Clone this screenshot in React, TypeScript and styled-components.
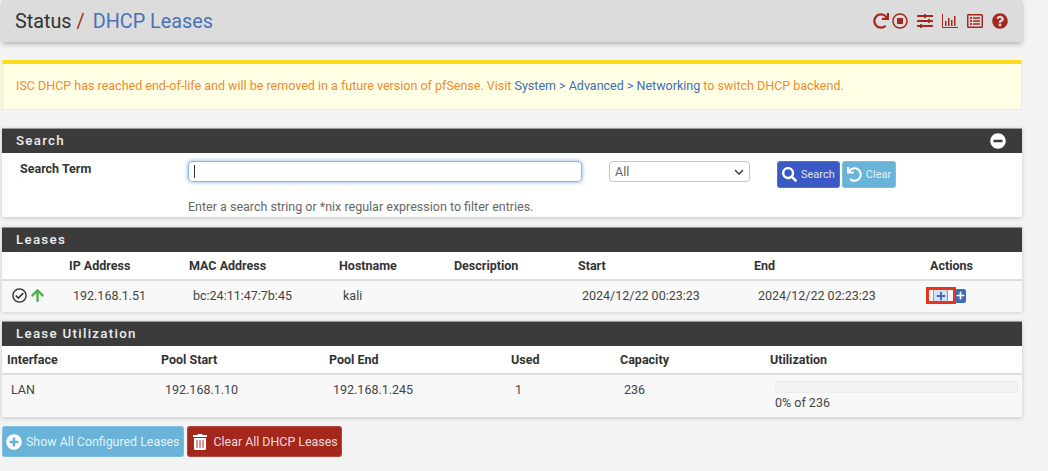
import React from "react";
import styled, { createGlobalStyle } from "styled-components";
import {
  FaArrowUp,
  FaMinusCircle,
  FaPlus,
  FaPlusCircle,
  FaQuestionCircle,
  FaRedo,
  FaRegCheckCircle,
  FaRegListAlt,
  FaRegStopCircle,
  FaSearch,
  FaSlidersH,
  FaTrashAlt,
  FaUndo,
} from "react-icons/fa";

const GlobalStyle = createGlobalStyle`
  html, body {
    margin: 0;
    background: #f3f3f3;
    font-family: Roboto, "Liberation Sans", sans-serif;
    font-size: 12.5px;
    color: #444;
  }
  * { box-sizing: border-box; }
`;

const Page = styled.div`
  width: 1048px;
  height: 471px;
  padding: 0 26px 0 2px;
  overflow: hidden;
`;

const TopBar = styled.header`
  height: 42px;
  background: #dcdcdc;
  box-shadow: 0 2px 5px rgba(0, 0, 0, 0.28);
  display: flex;
  align-items: center;
  justify-content: space-between;
  padding: 0 14px 0 13px;
`;

const Crumbs = styled.h1`
  margin: 0;
  font-size: 19.8px;
  font-weight: 400;
  color: #333;
  display: flex;
`;

const Slash = styled.span`
  color: #a52a22;
  margin: 0 8px 0 5px;
`;

const Current = styled.span`
  color: #4a72b8;
`;

const ToolIcons = styled.div`
  display: flex;
  align-items: center;
  gap: 9px;
  color: #a5281f;
  font-size: 16px;
  svg {
    display: block;
  }
  svg:first-child {
    margin-right: -6px;
  }
`;

const Notice = styled.div`
  margin-top: 18px;
  height: 50px;
  background: #ffffe6;
  border: 1px solid #fbeeb0;
  border-top: 4px solid #f9dc1c;
  padding: 0 13px 2px;
  display: flex;
  align-items: center;
  color: #f08a2c;
  a {
    color: #3f6cb4;
    text-decoration: none;
    white-space: pre;
  }
`;

const Panel = styled.section<{ $gap: number; $height: number }>`
  margin-top: ${(p) => p.$gap}px;
  height: ${(p) => p.$height}px;
  background: #fff;
  box-shadow: 0 1px 4px rgba(0, 0, 0, 0.2);
`;

const PanelHead = styled.div`
  height: 25px;
  background: #3b3b3b;
  border-top: 1px solid #999;
  color: #eee;
  font-size: 13.3px;
  font-weight: 500;
  letter-spacing: 1.3px;
  padding: 0 14px 2px;
  display: flex;
  align-items: center;
  justify-content: space-between;
`;

const Collapse = styled(FaMinusCircle)`
  color: #fff;
  font-size: 16px;
  margin: 2px 2px 0 0;
`;

const SearchForm = styled.div`
  display: grid;
  grid-template-columns: 186px 407px 182px 1fr;
  padding-top: 8px;
`;

const FieldLabel = styled.label`
  font-weight: 700;
  color: #333;
  padding: 0 0 0 18px;
  margin-top: 1px;
  line-height: 14px;
`;

const SearchBox = styled.div`
  width: 394px;
  height: 21px;
  border: 1px solid #86b6ee;
  border-radius: 4px;
  box-shadow: 0 0 4px rgba(102, 160, 233, 0.85);
  padding: 3px 5px;
  &::after {
    content: "";
    display: block;
    width: 1px;
    height: 13px;
    background: #333;
  }
`;

const Select = styled.div`
  width: 141px;
  height: 21px;
  margin-left: 14px;
  border: 1px solid #c4c4c4;
  border-radius: 4px;
  display: flex;
  align-items: center;
  justify-content: space-between;
  padding: 0 5px;
  color: #666;
  svg {
    display: block;
  }
`;

const ButtonRow = styled.div`
  display: flex;
  gap: 2px;
`;

const Btn = styled.button<{ $color: string; $wide?: boolean }>`
  height: ${(p) => (p.$wide ? 31 : 27)}px;
  border: 1px solid rgba(255, 255, 255, 0.15);
  border-radius: 3px;
  background: ${(p) => p.$color};
  color: rgba(255, 255, 255, 0.85);
  font-family: inherit;
  font-size: ${(p) => (p.$wide ? 12.4 : 11)}px;
  display: flex;
  align-items: center;
  gap: 4px;
  padding: 0 ${(p) => (p.$wide ? "3px" : "4px")};
  svg {
    color: #fff;
    font-size: ${(p) => (p.$wide ? 16 : 15)}px;
  }
`;

const TrashIcon = styled(FaTrashAlt)`
  margin: 0 2px 0 1px;
`;

const HelpText = styled.div`
  grid-column: 2 / span 3;
  margin-top: 11px;
  color: #666;
`;

const Row = styled.div<{ $cols: string; $head?: boolean; $tall?: boolean }>`
  display: grid;
  grid-template-columns: ${(p) => p.$cols};
  align-items: ${(p) => (p.$tall ? "start" : "center")};
  height: ${(p) => (p.$head ? 29 : p.$tall ? 42 : 31)}px;
  padding: ${(p) => (p.$tall ? "7px 0 0" : p.$head ? "0" : "0 0 2px")};
  background: ${(p) => (p.$head ? "#fff" : "#f8f8f8")};
  font-weight: ${(p) => (p.$head ? 700 : 400)};
  color: ${(p) => (p.$head ? "#333" : "#444")};
  border-bottom: ${(p) => (p.$head ? "2px solid #ddd" : "none")};
`;

const Th = styled.div`
  padding-left: 5px;
`;

const Td = styled.div`
  padding-left: 9px;
`;

const StatusIcons = styled.div`
  display: flex;
  align-items: center;
  gap: 3px;
  padding-left: 10px;
  font-size: 15px;
  svg {
    display: block;
  }
`;

const ActionCell = styled.div`
  position: relative;
  display: flex;
  align-items: center;
  padding-left: 8px;
`;

const ActionBtn = styled.span<{ $active?: boolean }>`
  width: ${(p) => (p.$active ? 15 : 11)}px;
  height: ${(p) => (p.$active ? 13 : 14)}px;
  margin-right: ${(p) => (p.$active ? 7 : 0)}px;
  border: ${(p) => (p.$active ? "1px solid #7f9fd0" : "none")};
  border-radius: 2px;
  background: ${(p) => (p.$active ? "#d5e0f1" : "#3f6cb4")};
  color: ${(p) => (p.$active ? "#3f6cb4" : "#fff")};
  font-size: ${(p) => (p.$active ? 10 : 9)}px;
  display: flex;
  align-items: center;
  justify-content: center;
`;

const Marker = styled.span`
  position: absolute;
  left: 1px;
  top: 50%;
  width: 30px;
  height: 17px;
  margin-top: -9px;
  border: 3px solid #e8341c;
`;

const UtilCell = styled.div`
  margin-top: -1px;
  padding: 0 4px 0 10px;
`;

const Meter = styled.div`
  height: 12px;
  background: #f3f3f3;
  border: 1px solid #ebebeb;
  border-radius: 3px;
  margin-bottom: 2px;
`;

const Actions = styled.div`
  display: flex;
  gap: 3px;
  margin-top: 9px;
`;

const LEASE_COLS = "62px 120px 150px 115px 124px 176px 176px 97px";
const UTIL_COLS = "154px 168px 182px 109px 150px 257px";

export default function App() {
  return (
    <>
      <GlobalStyle />
      <Page>
        <TopBar>
          <Crumbs>
            Status<Slash>/</Slash>
            <Current>DHCP Leases</Current>
          </Crumbs>
          <ToolIcons>
            <FaRedo />
            <FaRegStopCircle />
            <FaSlidersH />
            <svg width="16" height="16" viewBox="0 0 16 16" fill="currentColor">
              <path d="M0 1h1v13h15v1H0z" />
              <path d="M3 8h1.5v5H3zM6 5h1.5v8H6zM9 7h1.5v6H9zM12 3h1.5v10H12z" />
            </svg>
            <FaRegListAlt />
            <FaQuestionCircle />
          </ToolIcons>
        </TopBar>

        <Notice>
          ISC DHCP has reached end-of-life and will be removed in a future version of pfSense. Visit&nbsp;
          <a>System &gt; Advanced &gt; Networking</a>&nbsp;to switch DHCP backend.
        </Notice>

        <Panel $gap={18} $height={89}>
          <PanelHead>
            Search
            <Collapse />
          </PanelHead>
          <SearchForm>
            <FieldLabel>Search Term</FieldLabel>
            <SearchBox />
            <Select>
              All
              <svg width="10" height="6" viewBox="0 0 10 6">
                <path d="M1 1l4 4 4-4" fill="none" stroke="#444" strokeWidth="1.6" />
              </svg>
            </Select>
            <ButtonRow>
              <Btn $color="#3a59c4">
                <FaSearch />
                Search
              </Btn>
              <Btn $color="#69b3d9">
                <FaUndo />
                Clear
              </Btn>
            </ButtonRow>
            <HelpText>Enter a search string or *nix regular expression to filter entries.</HelpText>
          </SearchForm>
        </Panel>

        <Panel $gap={10} $height={84}>
          <PanelHead>Leases</PanelHead>
          <Row $cols={LEASE_COLS} $head>
            <Th />
            <Th>IP Address</Th>
            <Th>MAC Address</Th>
            <Th>Hostname</Th>
            <Th>Description</Th>
            <Th>Start</Th>
            <Th>End</Th>
            <Th>Actions</Th>
          </Row>
          <Row $cols={LEASE_COLS}>
            <StatusIcons>
              <FaRegCheckCircle color="#333" />
              <FaArrowUp color="#4cae4c" />
            </StatusIcons>
            <Td>192.168.1.51</Td>
            <Td>bc:24:11:47:7b:45</Td>
            <Td>kali</Td>
            <Td />
            <Td>2024/12/22 00:23:23</Td>
            <Td>2024/12/22 02:23:23</Td>
            <ActionCell>
              <ActionBtn $active>
                <FaPlus />
              </ActionBtn>
              <ActionBtn>
                <FaPlus />
              </ActionBtn>
              <Marker />
            </ActionCell>
          </Row>
        </Panel>

        <Panel $gap={10} $height={96}>
          <PanelHead>Lease Utilization</PanelHead>
          <Row $cols={UTIL_COLS} $head>
            <Th>Interface</Th>
            <Th>Pool Start</Th>
            <Th>Pool End</Th>
            <Th>Used</Th>
            <Th>Capacity</Th>
            <Th>Utilization</Th>
          </Row>
          <Row $cols={UTIL_COLS} $tall>
            <Td>LAN</Td>
            <Td>192.168.1.10</Td>
            <Td>192.168.1.245</Td>
            <Td>1</Td>
            <Td>236</Td>
            <UtilCell>
              <Meter />
              0% of 236
            </UtilCell>
          </Row>
        </Panel>

        <Actions>
          <Btn $color="#69b3d9" $wide>
            <FaPlusCircle />
            Show All Configured Leases
          </Btn>
          <Btn $color="#a3271d" $wide>
            <TrashIcon />
            Clear All DHCP Leases
          </Btn>
        </Actions>
      </Page>
    </>
  );
}
